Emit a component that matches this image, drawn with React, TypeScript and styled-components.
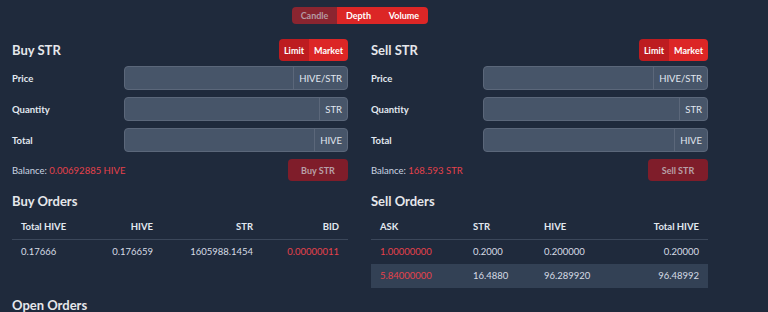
import React from "react";
import styled, { createGlobalStyle } from "styled-components";

const GlobalStyle = createGlobalStyle`
  html, body {
    margin: 0;
    padding: 0;
    background: #1f2a3c;
    font-family: Lato, "Noto Sans", sans-serif;
    color: #e2e8f0;
  }
  * { box-sizing: border-box; }
`;

const Page = styled.div`
  width: 768px;
  height: 312px;
  overflow: hidden;
  background: #1f2a3c;
  padding: 7px 12px 0 12px;
`;

const TopBar = styled.div`
  width: 696px;
  display: flex;
  justify-content: center;
`;

const Group = styled.div`
  display: flex;
  border-radius: 4px;
  overflow: hidden;
`;

const SegButton = styled.button<{ $tone: "muted" | "dark" | "bright"; $h: number; $w: number }>`
  height: ${(p) => p.$h}px;
  width: ${(p) => p.$w}px;
  border: none;
  padding: 0;
  font-family: inherit;
  font-size: 9px;
  font-weight: 700;
  color: ${(p) => (p.$tone === "muted" ? "#b59aa2" : "#ffffff")};
  background: ${(p) =>
    p.$tone === "muted" ? "#8a2530" : p.$tone === "dark" ? "#bd1c20" : "#dc2626"};
`;

const Columns = styled.div`
  display: grid;
  grid-template-columns: 336px 337px;
  column-gap: 23px;
  margin-top: 15px;
`;

const Panel = styled.div`
  display: flex;
  flex-direction: column;
`;

const PanelHead = styled.div`
  display: flex;
  justify-content: space-between;
  align-items: center;
  height: 22px;
`;

const Title = styled.div`
  font-size: 13px;
  font-weight: 700;
  color: #e5e7eb;
`;

const Fields = styled.div`
  display: flex;
  flex-direction: column;
  gap: 7px;
  margin-top: 5px;
`;

const FieldRow = styled.div`
  display: flex;
  align-items: center;
  height: 24px;
`;

const Label = styled.div`
  width: 112px;
  font-size: 9.5px;
  font-weight: 700;
  color: #e2e8f0;
`;

const InputWrap = styled.div`
  flex: 1;
  display: flex;
  height: 24px;
  border: 1px solid #5b677a;
  border-radius: 4px;
  background: #475569;
  overflow: hidden;
`;

const Input = styled.input`
  flex: 1;
  min-width: 0;
  border: none;
  background: transparent;
  outline: none;
`;

const Addon = styled.div`
  display: flex;
  align-items: center;
  padding: 0 5px 0 5px;
  border-left: 1px solid #5b677a;
  font-size: 9.5px;
  color: #e2e8f0;
`;

const BalanceRow = styled.div`
  display: flex;
  justify-content: space-between;
  align-items: center;
  margin-top: 7px;
  height: 22px;
`;

const Balance = styled.div`
  font-size: 9.5px;
  color: #cbd5e1;
`;

const Red = styled.span`
  color: #e5414b;
`;

const SubmitButton = styled.button`
  width: 60px;
  height: 22px;
  border: none;
  border-radius: 4px;
  background: #7f1d2a;
  color: #b8a0a8;
  font-family: inherit;
  font-size: 9px;
  font-weight: 700;
`;

const SectionTitle = styled(Title)`
  margin-top: 12px;
  height: 16px;
  line-height: 16px;
`;

const Table = styled.div<{ $cols: string }>`
  margin-top: 8px;
  display: grid;
  grid-template-columns: ${(p) => p.$cols};
`;

const HeadCell = styled.div<{ $right?: boolean }>`
  height: 23px;
  line-height: 20px;
  padding: 0 9px;
  font-size: 9.5px;
  font-weight: 700;
  color: #e2e8f0;
  text-align: ${(p) => (p.$right ? "right" : "left")};
  border-bottom: 1px solid #3b475a;
`;

const Cell = styled.div<{ $right?: boolean; $red?: boolean; $alt?: boolean }>`
  height: 24px;
  line-height: 24px;
  padding: 0 9px;
  font-size: 9.5px;
  color: ${(p) => (p.$red ? "#e5414b" : "#d6dce5")};
  text-align: ${(p) => (p.$right ? "right" : "left")};
  background: ${(p) => (p.$alt ? "#334155" : "transparent")};
`;

const OpenTitle = styled(Title)`
  margin-top: 9px;
`;

type Field = { label: string; unit: string };

const fields = (asset: string): Field[] => [
  { label: "Price", unit: `HIVE/${asset}` },
  { label: "Quantity", unit: asset },
  { label: "Total", unit: "HIVE" },
];

const TradeForm: React.FC<{ side: string; balance: string }> = ({ side, balance }) => (
  <Panel>
    <PanelHead>
      <Title>{side} STR</Title>
      <Group>
        <SegButton $tone="dark" $h={22} $w={30}>Limit</SegButton>
        <SegButton $tone="bright" $h={22} $w={39}>Market</SegButton>
      </Group>
    </PanelHead>
    <Fields>
      {fields("STR").map((f) => (
        <FieldRow key={f.label}>
          <Label>{f.label}</Label>
          <InputWrap>
            <Input />
            <Addon>{f.unit}</Addon>
          </InputWrap>
        </FieldRow>
      ))}
    </Fields>
    <BalanceRow>
      <Balance>
        Balance: <Red>{balance}</Red>
      </Balance>
      <SubmitButton>{side} STR</SubmitButton>
    </BalanceRow>
  </Panel>
);

const buyHead = ["Total HIVE", "HIVE", "STR", "BID"];
const buyRows = [["0.17666", "0.176659", "1605988.1454", "0.00000011"]];

const sellHead = ["ASK", "STR", "HIVE", "Total HIVE"];
const sellRows = [
  ["1.00000000", "0.2000", "0.200000", "0.20000"],
  ["5.84000000", "16.4880", "96.289920", "96.48992"],
];

export default function App() {
  return (
    <>
      <GlobalStyle />
      <Page>
        <TopBar>
          <Group>
            <SegButton $tone="muted" $h={17} $w={45}>Candle</SegButton>
            <SegButton $tone="bright" $h={17} $w={43}>Depth</SegButton>
            <SegButton $tone="bright" $h={17} $w={48}>Volume</SegButton>
          </Group>
        </TopBar>
        <Columns>
          <Panel>
            <TradeForm side="Buy" balance="0.00692885 HIVE" />
            <SectionTitle>Buy Orders</SectionTitle>
            <Table $cols="84px 66px 100px 86px">
              {buyHead.map((h, i) => (
                <HeadCell key={h} $right={i > 0}>{h}</HeadCell>
              ))}
              {buyRows.map((r, ri) =>
                r.map((c, i) => (
                  <Cell key={`${ri}-${i}`} $right={i > 0} $red={i === 3}>
                    {c}
                  </Cell>
                ))
              )}
            </Table>
          </Panel>
          <Panel>
            <TradeForm side="Sell" balance="168.593 STR" />
            <SectionTitle>Sell Orders</SectionTitle>
            <Table $cols="93px 71px 1fr 100px">
              {sellHead.map((h, i) => (
                <HeadCell key={h} $right={i === 3}>{h}</HeadCell>
              ))}
              {sellRows.map((r, ri) =>
                r.map((c, i) => (
                  <Cell key={`${ri}-${i}`} $right={i === 3} $red={i === 0} $alt={ri === 1}>
                    {c}
                  </Cell>
                ))
              )}
            </Table>
          </Panel>
        </Columns>
        <OpenTitle>Open Orders</OpenTitle>
      </Page>
    </>
  );
}
